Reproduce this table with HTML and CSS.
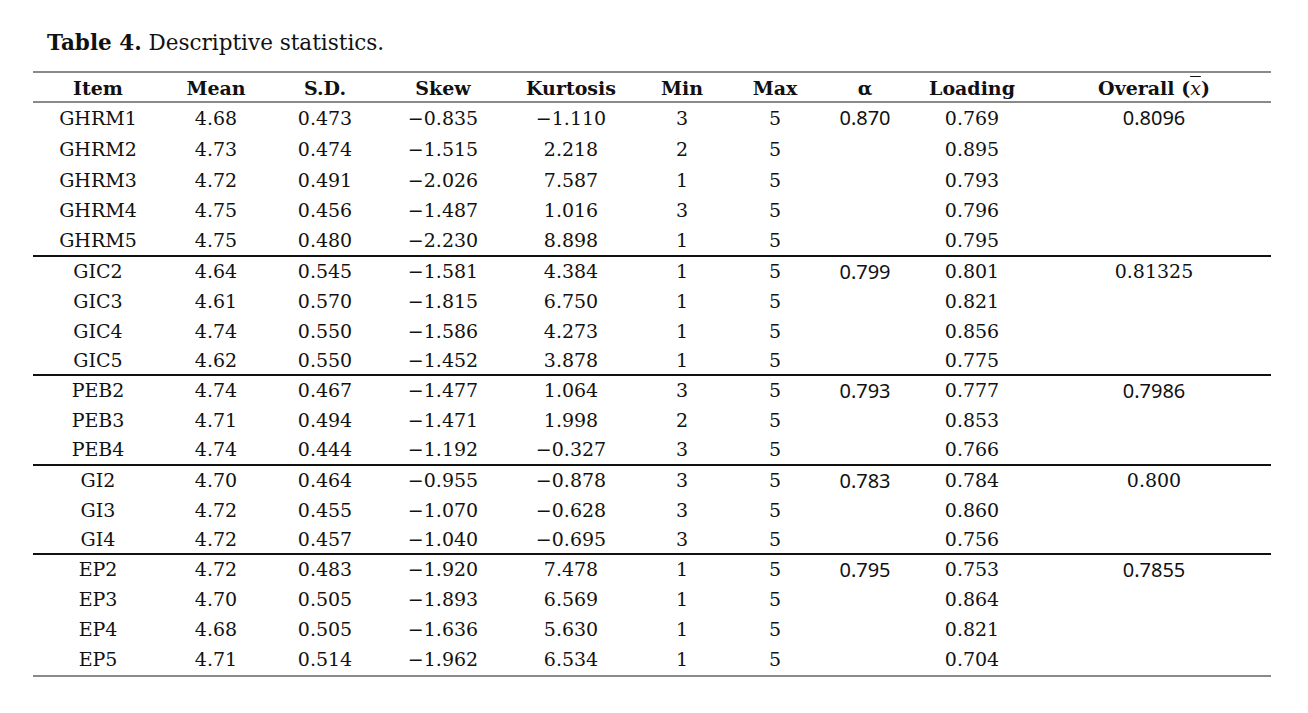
FILE: index.html
```html
<!DOCTYPE html>
<html lang="en">
<head>
<meta charset="utf-8">
<title>Table 4. Descriptive statistics.</title>
<link rel="stylesheet" href="styles.css">
</head>
<body>
<div class="page">
  <div class="caption"><b>Table 4.</b> Descriptive statistics.</div>
  <table class="stats">
    <colgroup>
      <col class="c-item"><col class="c-mean"><col class="c-sd"><col class="c-skew"><col class="c-kurt">
      <col class="c-min"><col class="c-max"><col class="c-alpha"><col class="c-load"><col class="c-over">
    </colgroup>
    <thead>
      <tr><th>Item</th><th>Mean</th><th>S.D.</th><th>Skew</th><th>Kurtosis</th><th>Min</th><th>Max</th><th>α</th><th>Loading</th><th>Overall (<span class="xbar">x</span>)</th></tr>
    </thead>
    <tbody>
      <tr class="g1"><td>GHRM1</td><td>4.68</td><td>0.473</td><td>−0.835</td><td>−1.110</td><td>3</td><td>5</td><td class="sans">0.870</td><td>0.769</td><td class="sans">0.8096</td></tr>
      <tr class="g1"><td>GHRM2</td><td>4.73</td><td>0.474</td><td>−1.515</td><td>2.218</td><td>2</td><td>5</td><td></td><td>0.895</td><td></td></tr>
      <tr class="g1"><td>GHRM3</td><td>4.72</td><td>0.491</td><td>−2.026</td><td>7.587</td><td>1</td><td>5</td><td></td><td>0.793</td><td></td></tr>
      <tr class="g1"><td>GHRM4</td><td>4.75</td><td>0.456</td><td>−1.487</td><td>1.016</td><td>3</td><td>5</td><td></td><td>0.796</td><td></td></tr>
      <tr class="g1 end"><td>GHRM5</td><td>4.75</td><td>0.480</td><td>−2.230</td><td>8.898</td><td>1</td><td>5</td><td></td><td>0.795</td><td></td></tr>
      <tr><td>GIC2</td><td>4.64</td><td>0.545</td><td>−1.581</td><td>4.384</td><td>1</td><td>5</td><td class="sans">0.799</td><td>0.801</td><td>0.81325</td></tr>
      <tr><td>GIC3</td><td>4.61</td><td>0.570</td><td>−1.815</td><td>6.750</td><td>1</td><td>5</td><td></td><td>0.821</td><td></td></tr>
      <tr><td>GIC4</td><td>4.74</td><td>0.550</td><td>−1.586</td><td>4.273</td><td>1</td><td>5</td><td></td><td>0.856</td><td></td></tr>
      <tr class="end"><td>GIC5</td><td>4.62</td><td>0.550</td><td>−1.452</td><td>3.878</td><td>1</td><td>5</td><td></td><td>0.775</td><td></td></tr>
      <tr><td>PEB2</td><td>4.74</td><td>0.467</td><td>−1.477</td><td>1.064</td><td>3</td><td>5</td><td class="sans">0.793</td><td>0.777</td><td class="sans">0.7986</td></tr>
      <tr><td>PEB3</td><td>4.71</td><td>0.494</td><td>−1.471</td><td>1.998</td><td>2</td><td>5</td><td></td><td>0.853</td><td></td></tr>
      <tr class="end"><td>PEB4</td><td>4.74</td><td>0.444</td><td>−1.192</td><td>−0.327</td><td>3</td><td>5</td><td></td><td>0.766</td><td></td></tr>
      <tr><td>GI2</td><td>4.70</td><td>0.464</td><td>−0.955</td><td>−0.878</td><td>3</td><td>5</td><td class="sans">0.783</td><td>0.784</td><td>0.800</td></tr>
      <tr><td>GI3</td><td>4.72</td><td>0.455</td><td>−1.070</td><td>−0.628</td><td>3</td><td>5</td><td></td><td>0.860</td><td></td></tr>
      <tr class="end"><td>GI4</td><td>4.72</td><td>0.457</td><td>−1.040</td><td>−0.695</td><td>3</td><td>5</td><td></td><td>0.756</td><td></td></tr>
      <tr><td>EP2</td><td>4.72</td><td>0.483</td><td>−1.920</td><td>7.478</td><td>1</td><td>5</td><td class="sans">0.795</td><td>0.753</td><td class="sans">0.7855</td></tr>
      <tr><td>EP3</td><td>4.70</td><td>0.505</td><td>−1.893</td><td>6.569</td><td>1</td><td>5</td><td></td><td>0.864</td><td></td></tr>
      <tr><td>EP4</td><td>4.68</td><td>0.505</td><td>−1.636</td><td>5.630</td><td>1</td><td>5</td><td></td><td>0.821</td><td></td></tr>
      <tr class="last"><td>EP5</td><td>4.71</td><td>0.514</td><td>−1.962</td><td>6.534</td><td>1</td><td>5</td><td></td><td>0.704</td><td></td></tr>
    </tbody>
  </table>
</div>
</body>
</html>
```

FILE: styles.css
```css
html, body {
  margin: 0;
  padding: 0;
  background: #ffffff;
}

body {
  font-family: "DejaVu Serif", "Liberation Serif", serif;
  color: #111111;
}

.page {
  padding: 28px 0 0 33px;
}

.caption {
  font-size: 21.5px;
  line-height: 30px;
  margin: 0 0 13px 14px;
}

.caption b {
  font-weight: bold;
}

.stats {
  border-collapse: separate;
  border-spacing: 0;
  width: 1238px;
  table-layout: fixed;
  font-size: 19px;
}

.c-item { width: 130px; }
.c-mean { width: 106px; }
.c-sd { width: 112px; }
.c-skew { width: 124px; }
.c-kurt { width: 132px; }
.c-min { width: 90px; }
.c-max { width: 96px; }
.c-alpha { width: 84px; }
.c-load { width: 130px; }
.c-over { width: 234px; }

.stats th,
.stats td {
  padding: 0;
  text-align: center;
  white-space: nowrap;
  vertical-align: middle;
}

.stats th {
  height: 26px;
  line-height: 26px;
  padding-top: 2px;
  font-weight: bold;
  border-top: 2px solid #8a8a8a;
  border-bottom: 2px solid #8a8a8a;
}

.stats td {
  height: 29.85px;
  line-height: 29.85px;
}

.stats tr.g1 td {
  height: 30.8px;
  line-height: 30.8px;
}

.stats tr.end td {
  height: 27.85px;
  line-height: 27.85px;
  border-bottom: 2px solid #111111;
}

.stats tr.g1.end td {
  height: 28.8px;
  line-height: 28.8px;
}

.stats tr.last td {
  height: 29.85px;
  line-height: 29.85px;
  border-bottom: 2px solid #8a8a8a;
}

.sans {
  font-family: "Noto Sans", "Open Sans", sans-serif;
  font-size: 20px;
}

.xbar {
  font-style: italic;
  text-decoration: overline;
  font-weight: normal;
}
```
